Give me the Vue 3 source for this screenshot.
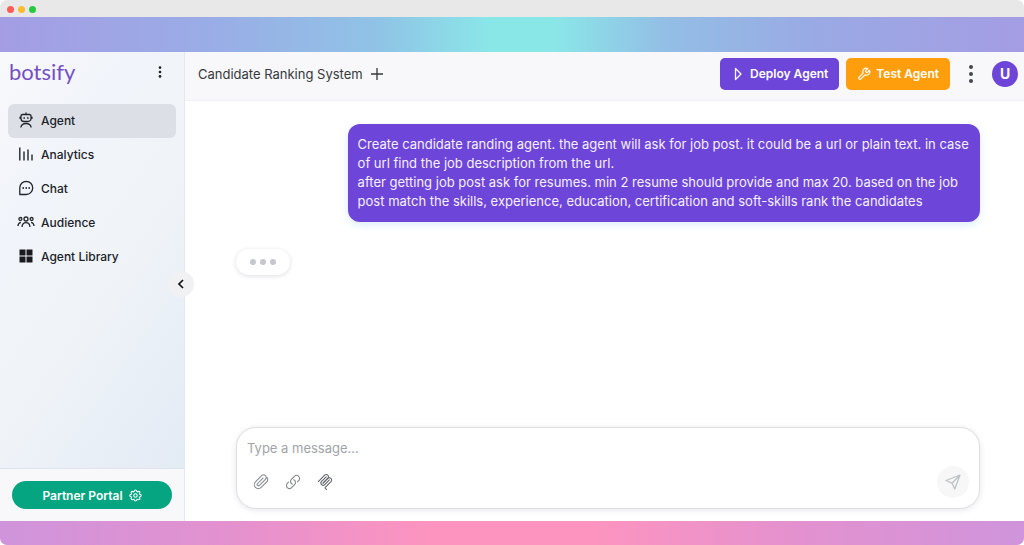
<script setup>
import { ref } from 'vue'

const active = ref('agent')
const message = ref('')
const items = [
  { id: 'agent', label: 'Agent' },
  { id: 'analytics', label: 'Analytics' },
  { id: 'chat', label: 'Chat' },
  { id: 'audience', label: 'Audience' },
  { id: 'library', label: 'Agent Library' },
]
</script>

<template>
  <div class="window">
    <div class="titlebar">
      <span class="light red"></span>
      <span class="light yellow"></span>
      <span class="light green"></span>
    </div>
    <div class="backdrop">
      <div class="app">
        <aside class="sidebar">
          <div class="brand">
            <a class="logo" href="#">botsify</a>
            <button class="icon-button" aria-label="Workspace menu">
              <svg width="6" height="14" viewBox="0 0 6 14" fill="#191b20">
                <circle cx="3" cy="2.6" r="1.3" /><circle cx="3" cy="7" r="1.3" /><circle cx="3" cy="11.4" r="1.3" />
              </svg>
            </button>
          </div>
          <nav class="nav">
            <a
              v-for="item in items"
              :key="item.id"
              href="#"
              class="nav-item"
              :class="{ active: active === item.id }"
              @click.prevent="active = item.id"
            >
              <svg v-if="item.id === 'agent'" class="nav-icon" viewBox="0 0 18 18">
                <path d="M9 1.500v2M5.500 3.500h7a1.500 1.500 0 0 1 1.500 1.500v2.500a3 3 0 0 1-3 3H7a3 3 0 0 1-3-3V5a1.500 1.500 0 0 1 1.500-1.500zM3 5.800v2M15 5.800v2M3.800 16.500c.5-2.600 2.300-4 5.200-4s4.700 1.400 5.200 4" />
                <path d="M7.200 6.200v1.600M10.800 6.200v1.600" stroke-width="1.500" />
              </svg>
              <svg v-else-if="item.id === 'analytics'" class="nav-icon" viewBox="0 0 18 18">
                <path d="M2.800 2.500v13M7 6.500v9M11 4.500v11M15 9.500v6" stroke-width="1.400" />
              </svg>
              <svg v-else-if="item.id === 'chat'" class="nav-icon" viewBox="0 0 18 18">
                <path d="M9.200 2.300a6.600 6.600 0 1 1-.2 13.200H2.800V8.800A6.500 6.500 0 0 1 9.200 2.300z" stroke-linejoin="round" />
                <g fill="#23262b" stroke="none"><circle cx="6.200" cy="9" r=".9" /><circle cx="9.200" cy="9" r=".9" /><circle cx="12.200" cy="9" r=".9" /></g>
              </svg>
              <svg v-else-if="item.id === 'audience'" class="nav-icon" viewBox="0 0 18 18">
                <circle cx="9" cy="6" r="2" />
                <path d="M5 14c.2-2.900 1.600-4.400 4-4.400s3.800 1.500 4 4.400" />
                <circle cx="3.400" cy="6" r="1.500" /><circle cx="14.600" cy="6" r="1.500" />
                <path d="M1 13c0-2.200.8-3.300 2.900-3.700M17 13c0-2.200-.8-3.300-2.900-3.700" />
              </svg>
              <svg v-else class="nav-icon" viewBox="0 0 18 18">
                <path d="M2.500 2.500h6v6h-6zM9.500 2.500h6v6h-6zM2.500 9.500h6v6h-6zM9.500 9.500h6v6h-6z" fill="#191b20" stroke="none" />
              </svg>
              <span>{{ item.label }}</span>
            </a>
          </nav>
          <div class="portal">
            <button class="portal-button">
              Partner Portal
              <svg width="13" height="13" viewBox="0 0 24 24" fill="none" stroke="#fff" stroke-width="2">
                <path d="M12 1.800q2 0 2.500 2.600 0 .5.600.7.500.3 1-.1Q18.300 3.700 19.500 5q1.300 1.200 0 3.200-.4.500-.1 1 .2.500.7.600 2.400.4 2.400 2.200t-2.400 2.400q-.5.100-.7.600-.3.500.1 1 1.300 2 0 3.300-1.200 1.200-3.300-.1-.5-.4-1-.1-.6.200-.7.700-.5 2.400-2.500 2.400t-2.500-2.400q-.1-.5-.7-.7-.5-.3-1 .1-2.100 1.300-3.300.1-1.300-1.300 0-3.300.4-.5.100-1-.2-.5-.7-.6-2.400-.5-2.400-2.400t2.400-2.200q.5-.1.700-.6.300-.5-.1-1-1.300-2 0-3.200Q5.700 3.700 7.800 5q.5.400 1 .1.600-.2.700-.7.500-2.600 2.500-2.600z" />
                <circle cx="12" cy="12" r="3.200" />
              </svg>
            </button>
          </div>
          <button class="collapse" aria-label="Collapse sidebar">
            <svg width="8" height="10" viewBox="0 0 8 10" fill="none" stroke="#111" stroke-width="1.700"><path d="M6 1 2 5l4 4" /></svg>
          </button>
        </aside>

        <main class="main">
          <header class="header">
            <h1 class="title">Candidate Ranking System</h1>
            <button class="icon-button" aria-label="New agent">
              <svg width="12" height="12" viewBox="0 0 12 12" stroke="#36383d" stroke-width="1.300"><path d="M6 0v12M0 6h12" /></svg>
            </button>
            <div class="actions">
              <button class="action deploy">
                <svg width="14" height="14" viewBox="0 0 14 14" fill="none" stroke="#fff" stroke-width="1.300" stroke-linejoin="round"><path d="M4.500 1.500v11L10 7z" /></svg>
                Deploy Agent
              </button>
              <button class="action test">
                <svg width="14" height="14" viewBox="0 0 24 24" fill="none" stroke="#fff" stroke-width="2" stroke-linejoin="round">
                  <path d="M14.700 6.300a1 1 0 0 0 0 1.400l1.600 1.600a1 1 0 0 0 1.400 0l3.770-3.770a6 6 0 0 1-7.940 7.940l-6.910 6.910a2.120 2.120 0 0 1-3-3l6.910-6.910a6 6 0 0 1 7.940-7.940l-3.760 3.760z" />
                </svg>
                Test Agent
              </button>
              <button class="icon-button more" aria-label="More options">
                <svg width="6" height="20" viewBox="0 0 6 20" fill="#45474c">
                  <circle cx="3" cy="3" r="2" /><circle cx="3" cy="10" r="2" /><circle cx="3" cy="17" r="2" />
                </svg>
              </button>
              <button class="avatar">U</button>
            </div>
          </header>

          <section class="chat">
            <div class="bubble">
              <p>Create candidate randing agent. the agent will ask for job post. it could be a url or plain text. in case<br />of url find the job description from the url.</p>
              <p>after getting job post ask for resumes. min 2 resume should provide and max 20. based on the job<br />post match the skills, experience, education, certification and soft-skills rank the candidates</p>
            </div>
            <div class="typing"><i></i><i></i><i></i></div>
            <form class="composer" @submit.prevent>
              <textarea v-model="message" rows="1" placeholder="Type a message..." aria-label="Message"></textarea>
              <div class="tools">
                <button type="button" class="icon-button" aria-label="Attach file">
                  <svg width="16" height="16" viewBox="0 0 24 24" fill="none" stroke="#85888e" stroke-width="1.600" stroke-linecap="round"><path d="m21.400 11-9.200 9.200a6 6 0 0 1-8.500-8.500l9.200-9.200a4 4 0 0 1 5.700 5.700l-9.200 9.200a2 2 0 0 1-2.800-2.800l8.500-8.500M21.400 11a6 6 0 0 0 0-5.500" /></svg>
                </button>
                <button type="button" class="icon-button" aria-label="Add link">
                  <svg width="16" height="16" viewBox="0 0 24 24" fill="none" stroke="#85888e" stroke-width="1.700" stroke-linecap="round"><path d="M13.200 8.700a4.500 4.500 0 0 1 1.200 7.200l-4.500 4.500a4.500 4.500 0 0 1-6.400-6.400l1.800-1.700M18.700 11.600l1.800-1.700a4.500 4.500 0 0 0-6.400-6.400L9.600 8a4.500 4.500 0 0 0 1.200 7.200" /></svg>
                </button>
                <button type="button" class="icon-button" aria-label="Connect tools">
                  <svg width="16" height="16" viewBox="10 4 160 172" fill="none" stroke="#5d6065" stroke-width="11" stroke-linecap="round">
                    <path d="M18 85 86 17a24 24 0 0 1 34 34l-51 51" />
                    <path d="m69 101 51-50a24 24 0 0 1 34 0 24 24 0 0 1 0 34l-61 62a8 8 0 0 0 0 11l12 12" />
                    <path d="M103 34 53 84a24 24 0 0 0 34 34l50-50" />
                  </svg>
                </button>
                <button class="send" aria-label="Send message">
                  <svg width="16" height="16" viewBox="0 0 16 16" fill="none" stroke="#bfc1c5" stroke-width="1.300" stroke-linejoin="round"><path d="M15 1 1 6.500l6 2.700L9.800 15zM15 1 7 9.200" /></svg>
                </button>
              </div>
            </form>
          </section>
        </main>
      </div>
    </div>
  </div>
</template>

<style>
body {
  margin: 0;
  background: #fff;
}
</style>

<style scoped>
* {
  box-sizing: border-box;
}
.window {
  display: flex;
  flex-direction: column;
  min-height: 100vh;
  font-family: Inter, "Open Sans", sans-serif;
  color: #202329;
  border-radius: 7px;
  overflow: hidden;
}
button {
  font: inherit;
  border: 0;
  padding: 0;
  cursor: pointer;
}
a {
  color: inherit;
  text-decoration: none;
}
svg {
  display: block;
  flex: none;
}
.titlebar {
  display: flex;
  align-items: center;
  gap: 4px;
  height: 17px;
  padding: 1px 7px 0;
  background: #e8e8e8;
}
.light {
  width: 7px;
  height: 7px;
  border-radius: 50%;
}
.red { background: #ff5c57; }
.yellow { background: #fdbc2e; }
.green { background: #27c940; }
.backdrop {
  flex: 1;
  display: flex;
  padding: 35px 0 24px;
  background:
    linear-gradient(90deg, #a49de4 0, #9aace6 20%, #90c3e6 37%, #8ae7e8 48%, #8ae7e8 54%, #93bee5 65%, #9aa9e4 80%, #a49de4 100%) top / 100% 50% no-repeat,
    linear-gradient(90deg, #cf94db 0, #e391cf 22%, #fd94bf 42%, #fd94bf 58%, #e391cf 78%, #cf94db 100%) bottom / 100% 50% no-repeat;
}
.app {
  flex: 1;
  display: flex;
  background: #fff;
}
.sidebar {
  position: relative;
  flex: none;
  display: flex;
  flex-direction: column;
  width: 185px;
  border-right: 1px solid #e2e8f1;
  background: linear-gradient(125deg, #f8f9fb 0%, #f1f4fa 25%, #f0f4f8 50%, #e9eff7 72%, #e0e9f2 100%);
}
.brand {
  display: flex;
  align-items: center;
  justify-content: space-between;
  height: 40px;
  padding: 0 21px 0 9px;
}
.logo {
  font-family: Lato, sans-serif;
  font-size: 22px;
  line-height: 28px;
  color: #7450c4;
}
.icon-button {
  display: flex;
  background: none;
}
.nav {
  flex: 1;
  padding: 12px 8px;
}
.nav-item {
  display: flex;
  align-items: center;
  gap: 6px;
  height: 34px;
  padding: 0 9px 1px;
  border-radius: 6px;
  font-size: 12px;
  font-weight: 500;
}
.nav-item.active {
  background: #dce0e6;
}
.nav-icon {
  width: 18px;
  height: 18px;
  margin-bottom: 2px;
  fill: none;
  stroke: #23262b;
  stroke-width: 1.3;
}
.portal {
  padding: 12px;
  border-top: 1px solid #dfe5ed;
  background: #f8f8fb;
}
.portal-button {
  display: flex;
  align-items: center;
  justify-content: center;
  gap: 6px;
  width: 100%;
  height: 28px;
  border-radius: 14px;
  background: #05a581;
  color: #fff;
  font-size: 12px;
  font-weight: 600;
}
.collapse {
  position: absolute;
  top: 219px;
  right: -10px;
  display: flex;
  align-items: center;
  justify-content: center;
  width: 26px;
  height: 26px;
  border-radius: 50%;
  background: #f1f1f3;
}
.main {
  flex: 1;
  min-width: 0;
  display: flex;
  flex-direction: column;
}
.header {
  display: flex;
  align-items: center;
  gap: 8px;
  height: 49px;
  padding: 0 6px 5px 13px;
  border-bottom: 1px solid #eff2f8;
  background: #f8f8fb;
}
.title {
  margin: 0;
  font-size: 13px;
  font-weight: 400;
  color: #36383d;
}
.actions {
  display: flex;
  align-items: center;
  gap: 7px;
  margin-left: auto;
}
.action {
  display: flex;
  align-items: center;
  gap: 5px;
  height: 32px;
  padding: 0 11px;
  border-radius: 5px;
  color: #fff;
  font-size: 12px;
  font-weight: 600;
}
.deploy { background: #6d45d8; }
.test { background: #ff9e0c; }
.more { margin: 0 11px; }
.avatar {
  width: 26px;
  height: 26px;
  border-radius: 50%;
  background: #6d45d8;
  color: #fff;
  font-size: 14px;
  font-weight: 700;
}
.chat {
  flex: 1;
  display: flex;
  flex-direction: column;
  align-items: flex-start;
  padding: 23px 44px 12px 51px;
}
.bubble {
  align-self: flex-end;
  width: 85%;
  padding: 11px 10px;
  border-radius: 12px;
  background: #6d45d8;
  color: #f6f1ff;
  font-size: 13px;
  line-height: 19px;
  box-shadow: 0 3px 8px #dcedfb;
}
.bubble p {
  margin: 0;
}
.typing {
  display: flex;
  align-items: center;
  gap: 4px;
  margin-top: 27px;
  padding: 10px 14px;
  border-radius: 14px;
  background: #fff;
  box-shadow: 0 1px 5px #dcdde2;
}
.typing i {
  width: 6px;
  height: 6px;
  border-radius: 50%;
  background: #c5c6ce;
}
.composer {
  align-self: stretch;
  margin-top: auto;
  padding: 10px;
  border: 1px solid #dddfe3;
  border-radius: 20px;
  background: #fff;
  box-shadow: 0 1px 6px #e6e6ea;
}
.composer textarea {
  display: block;
  width: 100%;
  height: 20px;
  padding: 0;
  border: 0;
  outline: 0;
  resize: none;
  background: none;
  font: inherit;
  font-size: 13px;
  line-height: 20px;
  color: #202329;
}
.composer textarea::placeholder {
  color: #a1a3a9;
  opacity: 1;
}
.tools {
  display: flex;
  align-items: center;
  gap: 16px;
  padding: 8px 0 0 6px;
}
.send {
  display: flex;
  align-items: center;
  justify-content: center;
  width: 32px;
  height: 32px;
  margin-left: auto;
  border-radius: 50%;
  background: #f7f7f8;
}
</style>
